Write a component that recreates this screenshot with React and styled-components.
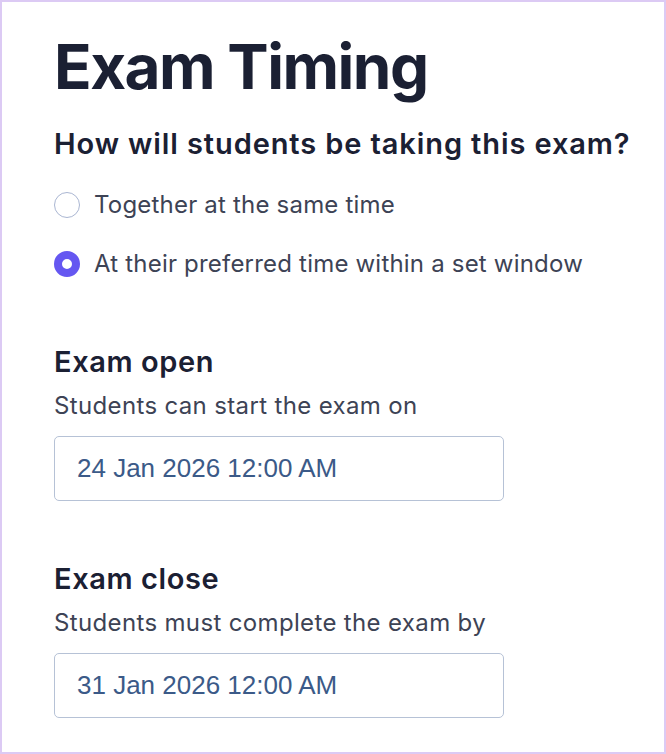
import React from "react";
import styled, { createGlobalStyle } from "styled-components";

const GlobalStyle = createGlobalStyle`
  html, body {
    margin: 0;
    padding: 0;
    background: #ffffff;
  }
  * {
    box-sizing: border-box;
  }
`;

const Frame = styled.div`
  width: 666px;
  height: 754px;
  border: 2px solid #dccaf4;
  background: #ffffff;
  padding: 30px 0 0 52px;
  font-family: Inter, "Noto Sans", sans-serif;
  color: #1b2033;
  overflow: hidden;
`;

const Title = styled.h1`
  margin: 0;
  font-size: 62px;
  font-weight: 700;
  line-height: 70px;
  letter-spacing: -1.5px;
`;

const Question = styled.h2`
  margin: 24px 0 0;
  font-size: 29px;
  font-weight: 600;
  line-height: 36px;
  letter-spacing: 0.9px;
`;

const Options = styled.div`
  display: flex;
  flex-direction: column;
  gap: 29px;
  margin-top: 28px;
`;

const Option = styled.label`
  display: flex;
  align-items: center;
  gap: 14px;
  height: 30px;
  font-size: 24px;
  line-height: 30px;
  letter-spacing: 0.2px;
  color: #3d4355;
  cursor: pointer;
`;

const Radio = styled.span`
  width: 26px;
  height: 26px;
  border-radius: 50%;
  flex-shrink: 0;
  border: ${(props) => (props.checked ? "8px solid #6557f1" : "1.5px solid #aab6d2")};
  background: #ffffff;
`;

const Section = styled.section`
  margin-top: ${(props) => props.top || "0px"};
`;

const SectionTitle = styled.h3`
  margin: 0;
  font-size: 29px;
  font-weight: 600;
  line-height: 36px;
  letter-spacing: 0.6px;
`;

const Hint = styled.p`
  margin: 11px 0 0;
  font-size: 24px;
  line-height: 30px;
  letter-spacing: 0.35px;
  color: #3d4355;
`;

const DateBox = styled.div`
  margin-top: 15px;
  width: 450px;
  height: 65px;
  border: 1px solid #b6c2d6;
  border-radius: 5px;
  padding: 0 22px;
  display: flex;
  align-items: center;
  font-family: "Liberation Sans", Arial, sans-serif;
  font-size: 26px;
  color: #3b5a88;
`;

const DateField = ({ title, hint, value, top }) => (
  <Section top={top}>
    <SectionTitle>{title}</SectionTitle>
    <Hint>{hint}</Hint>
    <DateBox>{value}</DateBox>
  </Section>
);

const App = () => {
  return (
    <>
      <GlobalStyle />
      <Frame>
        <Title>Exam Timing</Title>
        <Question>How will students be taking this exam?</Question>
        <Options>
          <Option>
            <Radio />
            Together at the same time
          </Option>
          <Option>
            <Radio checked />
            At their preferred time within a set window
          </Option>
        </Options>
        <DateField
          top="65px"
          title="Exam open"
          hint="Students can start the exam on"
          value="24 Jan 2026 12:00 AM"
        />
        <DateField
          top="60px"
          title="Exam close"
          hint="Students must complete the exam by"
          value="31 Jan 2026 12:00 AM"
        />
      </Frame>
    </>
  );
};

export default App;
